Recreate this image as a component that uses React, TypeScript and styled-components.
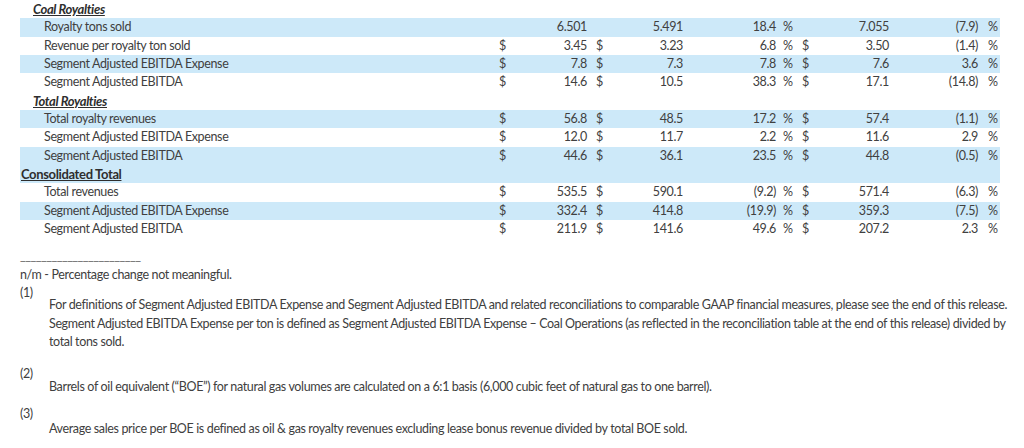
import styled, { createGlobalStyle } from "styled-components";

const GlobalStyle = createGlobalStyle`
    html, body {
        margin: 0;
        padding: 0;
        background: #ffffff;
    }
    body {
        font-family: Lato, "Open Sans", sans-serif;
        color: #404040;
        font-size: 12.5px;
        letter-spacing: -0.36px;
    }
`;

type Row =
    | { kind: "head"; label: string; level: "section" | "total"; band?: boolean }
    | {
          kind: "data";
          label: string;
          band?: boolean;
          dollar?: boolean;
          a: string;
          b: string;
          pa: string;
          c: string;
          pc: string;
      };

const rows: Row[] = [
    { kind: "head", label: "Coal Royalties", level: "section" },
    { kind: "data", label: "Royalty tons sold", band: true, a: "6.501", b: "5.491", pa: "18.4", c: "7.055", pc: "(7.9)" },
    { kind: "data", label: "Revenue per royalty ton sold", dollar: true, a: "3.45", b: "3.23", pa: "6.8", c: "3.50", pc: "(1.4)" },
    { kind: "data", label: "Segment Adjusted EBITDA Expense", band: true, dollar: true, a: "7.8", b: "7.3", pa: "7.8", c: "7.6", pc: "3.6" },
    { kind: "data", label: "Segment Adjusted EBITDA", dollar: true, a: "14.6", b: "10.5", pa: "38.3", c: "17.1", pc: "(14.8)" },
    { kind: "head", label: "Total Royalties", level: "section" },
    { kind: "data", label: "Total royalty revenues", band: true, dollar: true, a: "56.8", b: "48.5", pa: "17.2", c: "57.4", pc: "(1.1)" },
    { kind: "data", label: "Segment Adjusted EBITDA Expense", dollar: true, a: "12.0", b: "11.7", pa: "2.2", c: "11.6", pc: "2.9" },
    { kind: "data", label: "Segment Adjusted EBITDA", band: true, dollar: true, a: "44.6", b: "36.1", pa: "23.5", c: "44.8", pc: "(0.5)" },
    { kind: "head", label: "Consolidated Total", level: "total", band: true },
    { kind: "data", label: "Total revenues", dollar: true, a: "535.5", b: "590.1", pa: "(9.2)", c: "571.4", pc: "(6.3)" },
    { kind: "data", label: "Segment Adjusted EBITDA Expense", band: true, dollar: true, a: "332.4", b: "414.8", pa: "(19.9)", c: "359.3", pc: "(7.5)" },
    { kind: "data", label: "Segment Adjusted EBITDA", dollar: true, a: "211.9", b: "141.6", pa: "49.6", c: "207.2", pc: "2.3" },
];

function App() {
    return (
        <>
            <GlobalStyle />
            <Style_Page>
                <Style_Table>
                    {rows.map((row, i) =>
                        row.kind === "head" ? (
                            <Style_Row key={i} $band={row.band}>
                                <Style_Head $level={row.level}>{row.label}</Style_Head>
                            </Style_Row>
                        ) : (
                            <Style_Row key={i} $band={row.band}>
                                <Style_Label>{row.label}</Style_Label>
                                <Style_Sign $pad={4}>{row.dollar ? "$" : ""}</Style_Sign>
                                <Style_Num>{row.a}</Style_Num>
                                <Style_Sign $pad={9}>{row.dollar ? "$" : ""}</Style_Sign>
                                <Style_Num>{row.b}</Style_Num>
                                <Style_Num>{row.pa}</Style_Num>
                                <Style_Sign $pad={7}>%</Style_Sign>
                                <Style_Sign $pad={7}>{row.dollar ? "$" : ""}</Style_Sign>
                                <Style_Num>{row.c}</Style_Num>
                                <Style_Num>{row.pc}</Style_Num>
                                <Style_Sign $pad={10}>%</Style_Sign>
                            </Style_Row>
                        )
                    )}
                </Style_Table>

                <Style_Notes>
                    <p className="rule">_______________________</p>
                    <p>n/m - Percentage change not meaningful.</p>

                    <Style_Note $gap={0}>
                        <Style_Marker $h={12}>(1)</Style_Marker>
                        <Style_NoteText>
                            For definitions of Segment Adjusted EBITDA Expense and Segment Adjusted EBITDA and related
                            reconciliations to comparable GAAP financial measures, please see the end of this release.
                            <br />
                            Segment Adjusted EBITDA Expense per ton is defined as Segment Adjusted EBITDA Expense – Coal
                            Operations (as reflected in the reconciliation table at the end of this release) divided by
                            <br />
                            total tons sold.
                        </Style_NoteText>
                    </Style_Note>

                    <Style_Note $gap={13}>
                        <Style_Marker $h={13}>(2)</Style_Marker>
                        <Style_NoteText>
                            Barrels of oil equivalent (“BOE”) for natural gas volumes are calculated on a 6:1 basis (6,000
                            cubic feet of natural gas to one barrel).
                        </Style_NoteText>
                    </Style_Note>

                    <Style_Note $gap={9}>
                        <Style_Marker $h={15}>(3)</Style_Marker>
                        <Style_NoteText>
                            Average sales price per BOE is defined as oil &amp; gas royalty revenues excluding lease bonus
                            revenue divided by total BOE sold.
                        </Style_NoteText>
                    </Style_Note>
                </Style_Notes>
            </Style_Page>
        </>
    );
}

export default App;

const Style_Page = styled.div`
    width: 1024px;
    height: 448px;
    overflow: hidden;
    padding-left: 20px;
    box-sizing: border-box;
`;

const Style_Table = styled.div`
    width: 980px;
    display: flex;
    flex-direction: column;
`;

const Style_Row = styled.div<{ $band?: boolean }>`
    display: grid;
    grid-template-columns: 475px 15px 77px 23px 73px 93px 19px 20px 74px 89px 22px;
    height: 18.33px;
    line-height: 18.33px;
    background: ${(p) => (p.$band ? "#cde9f9" : "transparent")};
    white-space: nowrap;
`;

const Style_Head = styled.div<{ $level: "section" | "total" }>`
    grid-column: 1 / -1;
    padding-left: ${(p) => (p.$level === "section" ? "13px" : "1px")};
    font-size: 13px;
    font-weight: 700;
    font-style: ${(p) => (p.$level === "section" ? "italic" : "normal")};
    text-decoration: underline;
    color: #2e2e2e;
`;

const Style_Label = styled.div`
    padding-left: 24px;
`;

const Style_Sign = styled.div<{ $pad: number }>`
    padding-left: ${(p) => p.$pad}px;
`;

const Style_Num = styled.div`
    text-align: right;
`;

const Style_Notes = styled.div`
    padding-top: 9px;
    line-height: 18.5px;

    p {
        margin: 0;
    }

    .rule {
        color: #6a6a6a;
        letter-spacing: -0.5px;
    }
`;

const Style_Note = styled.div<{ $gap: number }>`
    margin-top: ${(p) => p.$gap}px;
`;

const Style_Marker = styled.div<{ $h: number }>`
    height: ${(p) => p.$h}px;
    line-height: 18px;
`;

const Style_NoteText = styled.div`
    padding-left: 29px;
    white-space: nowrap;
`;
